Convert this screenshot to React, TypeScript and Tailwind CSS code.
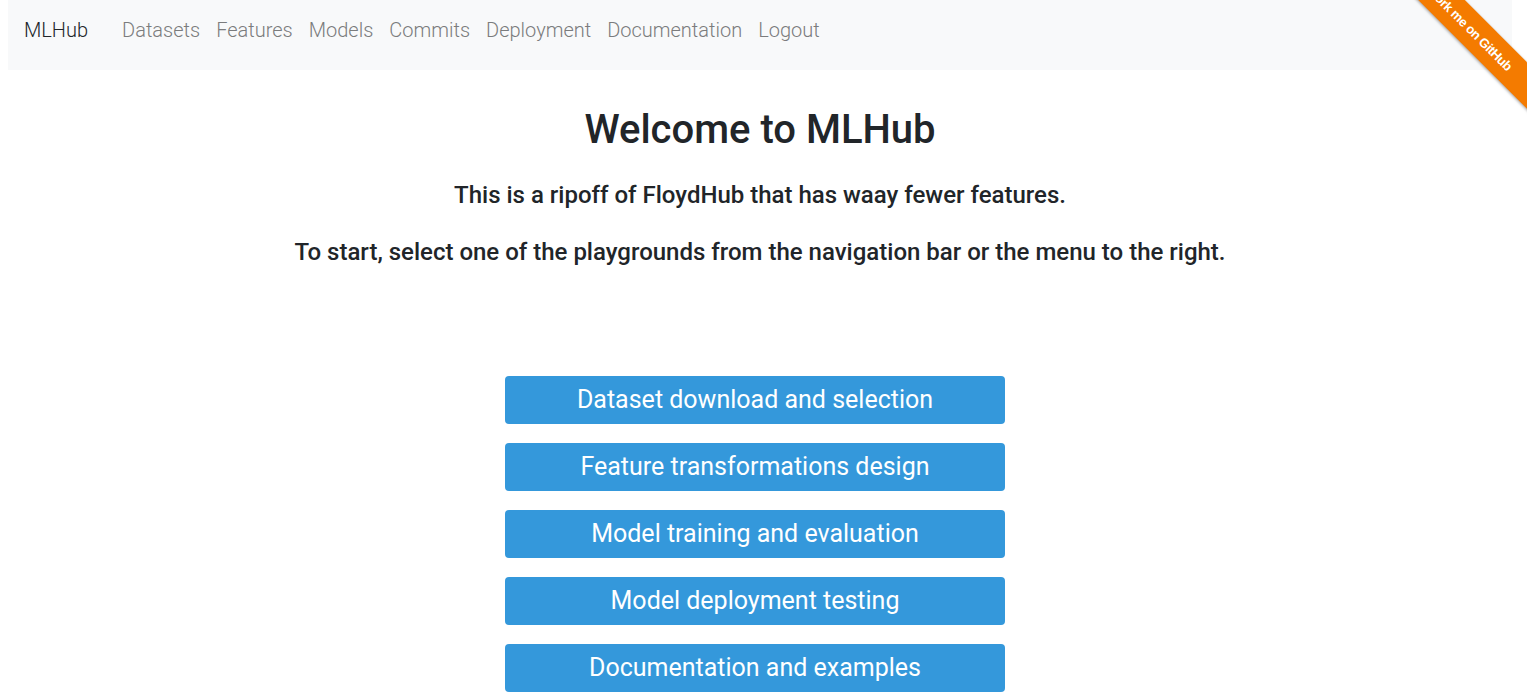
import React from 'react';

const navLinks = ['Datasets', 'Features', 'Models', 'Commits', 'Deployment', 'Documentation', 'Logout'];

const playgrounds = [
  'Dataset download and selection',
  'Feature transformations design',
  'Model training and evaluation',
  'Model deployment testing',
  'Documentation and examples',
];

const App: React.FC = () => {
  return (
    <div className="relative min-h-screen bg-white text-[#212529] font-['Roboto',sans-serif] overflow-hidden">
      {/* Navbar */}
      <nav className="ml-2 mr-[15px] h-[70px] bg-[#f8f9fa] flex items-center pl-4 pb-[10px]">
        <a className="text-[20px] text-[#212529] font-light mr-[34px]">MLHub</a>
        <div className="flex items-center gap-[16px]">
          {navLinks.map((l) => (
            <a key={l} className="text-[20px] font-light text-[#7b7c7d]">
              {l}
            </a>
          ))}
        </div>
      </nav>

      {/* Main */}
      <main className="ml-2 mr-[15px] flex flex-col items-center text-center">
        <h1 className="mt-[36px] text-[40px] leading-[48px] font-medium">Welcome to MLHub</h1>
        <p className="mt-[27px] text-[24px] leading-[29px] font-medium">
          This is a ripoff of FloydHub that has waay fewer features.
        </p>
        <p className="mt-[28px] text-[24px] leading-[29px] font-medium">
          To start, select one of the playgrounds from the navigation bar or the menu to the right.
        </p>

        <div className="mt-[109px] mr-[10px] flex flex-col gap-[19px] pb-4">
          {playgrounds.map((p) => (
            <button
              key={p}
              className="w-[500px] h-[48px] rounded-[4px] bg-[#3498db] text-white text-[25px] font-normal"
            >
              {p}
            </button>
          ))}
        </div>
      </main>

      {/* Fork me ribbon */}
      <div className="absolute top-0 right-0 w-[150px] h-[150px] overflow-hidden pointer-events-none">
        <div className="absolute left-[-16px] top-[13px] w-[220px] h-[33px] rotate-45 bg-[#f47b00] shadow-[0_1px_3px_rgba(0,0,0,0.35)] flex items-center justify-center">
          <span className="text-white text-[13px] font-bold tracking-[-0.4px] font-['Liberation_Sans',sans-serif]">
            Fork me on GitHub
          </span>
        </div>
      </div>
    </div>
  );
};

export default App;
